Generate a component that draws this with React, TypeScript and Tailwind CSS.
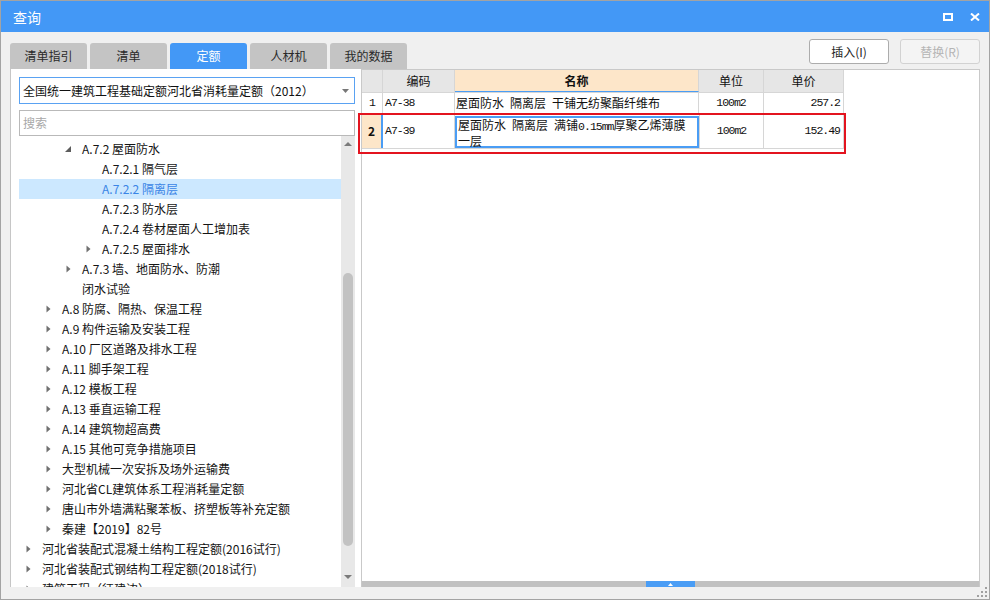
import React from 'react'

const ui = "font-['Noto_Sans_CJK_SC','Microsoft_YaHei',sans-serif]"
const mono = "font-['Liberation_Mono','Noto_Sans_CJK_SC',monospace] text-[11.5px] tracking-[-1px]"

type Node = { level: number; text: string; state?: 'open' | 'closed'; selected?: boolean }

const tree: Node[] = [
  { level: 2, text: 'A.7.2 屋面防水', state: 'open' },
  { level: 3, text: 'A.7.2.1 隔气层' },
  { level: 3, text: 'A.7.2.2 隔离层', selected: true },
  { level: 3, text: 'A.7.2.3 防水层' },
  { level: 3, text: 'A.7.2.4 卷材屋面人工增加表' },
  { level: 3, text: 'A.7.2.5 屋面排水', state: 'closed' },
  { level: 2, text: 'A.7.3 墙、地面防水、防潮', state: 'closed' },
  { level: 2, text: '闭水试验' },
  { level: 1, text: 'A.8 防腐、隔热、保温工程', state: 'closed' },
  { level: 1, text: 'A.9 构件运输及安装工程', state: 'closed' },
  { level: 1, text: 'A.10 厂区道路及排水工程', state: 'closed' },
  { level: 1, text: 'A.11 脚手架工程', state: 'closed' },
  { level: 1, text: 'A.12 模板工程', state: 'closed' },
  { level: 1, text: 'A.13 垂直运输工程', state: 'closed' },
  { level: 1, text: 'A.14 建筑物超高费', state: 'closed' },
  { level: 1, text: 'A.15 其他可竞争措施项目', state: 'closed' },
  { level: 1, text: '大型机械一次安拆及场外运输费', state: 'closed' },
  { level: 1, text: '河北省CL建筑体系工程消耗量定额', state: 'closed' },
  { level: 1, text: '唐山市外墙满粘聚苯板、挤塑板等补充定额', state: 'closed' },
  { level: 1, text: '秦建【2019】82号', state: 'closed' },
  { level: 0, text: '河北省装配式混凝土结构工程定额(2016试行)', state: 'closed' },
  { level: 0, text: '河北省装配式钢结构工程定额(2018试行)', state: 'closed' },
  { level: 0, text: '建筑工程（征建边）', state: 'closed' },
]

const indent = ['pl-0', 'pl-[20px]', 'pl-[40px]', 'pl-[60px]']

function Arrow({ state }: { state?: 'open' | 'closed' }) {
  if (state === 'closed')
    return (
      <svg width="5" height="8" viewBox="0 0 5 8" className="ml-[7px]">
        <path d="M0.5 0.5 L4.5 4 L0.5 7.5 Z" fill="#707070" />
      </svg>
    )
  if (state === 'open')
    return (
      <svg width="6" height="6" viewBox="0 0 6 6" className="ml-[6px]">
        <path d="M6 0 L6 6 L0 6 Z" fill="#5c5c5c" />
      </svg>
    )
  return null
}

function Tab({ label, active }: { label: string; active?: boolean }) {
  return (
    <div
      className={
        active
          ? 'w-[77px] h-[26px] rounded-t-[3px] bg-[#4398f6] text-white flex items-center justify-center text-[12px]'
          : 'w-[77px] h-[26px] rounded-t-[3px] bg-[#c4c4c4] text-[#2a2a2a] flex items-center justify-center text-[12px]'
      }
    >
      {label}
    </div>
  )
}

const cell = 'border-r border-[#d6d6d6] h-full flex items-center shrink-0'
const sp = '\u2002'

export default function App() {
  return (
    <div className={`w-[990px] h-[600px] border border-[#a3a3a3] bg-[#f0f0f0] flex flex-col ${ui}`}>
      {/* title bar */}
      <div className="h-[31px] bg-[#4398f6] flex items-center justify-between pl-[12px] pr-[9px] shrink-0">
        <span className="text-white text-[14px] leading-none">查询</span>
        <div className="flex items-center gap-[17px]">
          <div className="w-[10px] h-[8px] border-2 border-white" />
          <svg width="10" height="8" viewBox="0 0 10 8">
            <path d="M1 0.5 L9 7.5 M9 0.5 L1 7.5" stroke="#fff" strokeWidth="2" />
          </svg>
        </div>
      </div>

      {/* tabs + buttons */}
      <div className="mt-[7px] h-[30px] flex justify-between pl-[9px] pr-[9px] shrink-0">
        <div className="self-end flex gap-[3px]">
          <Tab label="清单指引" />
          <Tab label="清单" />
          <Tab label="定额" active />
          <Tab label="人材机" />
          <Tab label="我的数据" />
        </div>
        <div className="flex gap-[11px] items-start">
          <div className="w-[80px] h-[25px] bg-white border border-[#acacac] rounded-[3px] flex items-center justify-center text-[12px] text-[#1f1f1f]">
            插入(I)
          </div>
          <div className="w-[80px] h-[25px] bg-[#f4f4f4] border border-[#d2d2d2] rounded-[3px] flex items-center justify-center text-[12px] text-[#b4b4b4]">
            替换(R)
          </div>
        </div>
      </div>

      {/* main */}
      <div className="h-[518px] flex pl-[9px] pr-[9px] shrink-0">
        {/* left panel */}
        <div className="w-[351px] h-full bg-white border-l border-[#c6c6c6] flex flex-col pt-[8px] pl-[8px] pr-[6px]">
          <div className="h-[27px] border border-[#5aa2f2] flex items-center justify-between pl-[3px] pr-[5px] text-[12px] text-[#111]">
            <span>全国统一建筑工程基础定额河北省消耗量定额（2012）</span>
            <svg width="7" height="4" viewBox="0 0 7 4">
              <path d="M0 0 L7 0 L3.5 4 Z" fill="#777" />
            </svg>
          </div>
          <div className="mt-[6px] h-[26px] border border-[#b9b9b9] flex items-center pl-[3px] text-[12px] text-[#a8a8a8]">
            搜索
          </div>
          <div className="flex-1 flex min-h-0">
            <div className="flex-1 pt-[3px] overflow-hidden">
              {tree.map((n, i) => (
                <div
                  key={i}
                  className={`h-[20px] flex items-center ${indent[n.level]} ${
                    n.selected ? 'bg-[#cce8ff] text-[#3a85e6]' : 'text-[#141414]'
                  }`}
                >
                  <div className="w-[23px] shrink-0 flex items-center">
                    <Arrow state={n.state} />
                  </div>
                  <span className="text-[12px] whitespace-nowrap leading-none">{n.text}</span>
                </div>
              ))}
            </div>
            <div className="w-[14px] bg-[#e8e8e8] flex flex-col items-center shrink-0">
              <div className="h-[16px] flex items-center justify-center">
                <svg width="8" height="4" viewBox="0 0 8 4">
                  <path d="M0 4 L8 4 L4 0 Z" fill="#7a7a7a" />
                </svg>
              </div>
              <div className="h-[121px]" />
              <div className="w-[10px] h-[273px] rounded-full bg-[#c2c2c2]" />
              <div className="flex-1" />
              <div className="h-[12px] flex items-start justify-center">
                <svg width="8" height="4" viewBox="0 0 8 4">
                  <path d="M0 0 L8 0 L4 4 Z" fill="#7a7a7a" />
                </svg>
              </div>
            </div>
          </div>
        </div>

        {/* right panel */}
        <div className="relative w-[619px] h-full bg-white border-t border-x border-[#c9c9c9] flex flex-col">
          <div className="flex-1 text-[12px] text-[#111]">
            {/* header */}
            <div className="h-[23px] flex border-b border-[#d6d6d6] bg-[#e6e6e6] w-[482px]">
              <div className={`${cell} w-[21px]`} />
              <div className={`${cell} w-[72px] justify-center`}>编码</div>
              <div className={`${cell} w-[244px] justify-center bg-[#fde6c9] border-b border-b-[#4a9df5] font-bold`}>名称</div>
              <div className={`${cell} w-[65px] justify-center`}>单位</div>
              <div className={`${cell} w-[80px] justify-center`}>单价</div>
            </div>
            {/* row 1 */}
            <div className="h-[21px] flex border-b border-[#d6d6d6] w-[482px]">
              <div className={`${cell} w-[21px] justify-center ${mono}`}>1</div>
              <div className={`${cell} w-[72px] pl-[2px] ${mono}`}>A7-38</div>
              <div className={`${cell} w-[244px] pl-[1px] whitespace-nowrap`}>
                屋面防水{sp}隔离层{sp}干铺无纺聚酯纤维布
              </div>
              <div className={`${cell} w-[65px] justify-center ${mono}`}>100m2</div>
              <div className={`${cell} w-[80px] justify-end pr-[3px] ${mono}`}>257.2</div>
            </div>
            {/* row 2 */}
            <div className="h-[35px] flex border-b border-[#d6d6d6] w-[482px]">
              <div className={`${cell} w-[21px] justify-center bg-[#fde6c9] border-r-2 border-r-[#4a9df5] font-bold text-[12px]`}>
                2
              </div>
              <div className={`${cell} w-[72px] pl-[2px] ${mono}`}>A7-39</div>
              <div className="w-[244px] h-full shrink-0 pt-[2px]">
                <div className="h-full border-2 border-[#4a9df5] pl-[1px] text-[12px] leading-[14px]">
                  屋面防水{sp}隔离层{sp}满铺<span className={mono}>0.15mm</span>厚聚乙烯薄膜
                  <br />
                  一层
                </div>
              </div>
              <div className={`${cell} w-[65px] justify-center ${mono} border-l border-[#d6d6d6]`}>100m2</div>
              <div className={`${cell} w-[80px] justify-end pr-[3px] ${mono}`}>152.49</div>
            </div>
          </div>
          {/* red highlight annotation */}
          <div className="absolute left-[-4px] top-[43px] w-[488px] h-[41px] border-2 border-[#e3141f]" />
          {/* horizontal scrollbar */}
          <div className="h-[6px] bg-[#c1c1c1] flex shrink-0">
            <div className="w-[284px]" />
            <div className="w-[49px] h-full bg-[#4a9df5] flex items-center justify-center">
              <svg width="5" height="3" viewBox="0 0 5 3">
                <path d="M0 3 L5 3 L2.5 0 Z" fill="#fff" />
              </svg>
            </div>
          </div>
        </div>
      </div>

      {/* bottom strip with grip */}
      <div className="flex-1 flex justify-end items-end pr-[2px] pb-[2px]">
        <svg width="10" height="10" viewBox="0 0 10 10">
          <rect x="8" y="0" width="2" height="2" fill="#a0a0a0" />
          <rect x="4" y="4" width="2" height="2" fill="#a0a0a0" />
          <rect x="8" y="4" width="2" height="2" fill="#a0a0a0" />
          <rect x="0" y="8" width="2" height="2" fill="#a0a0a0" />
          <rect x="4" y="8" width="2" height="2" fill="#a0a0a0" />
          <rect x="8" y="8" width="2" height="2" fill="#a0a0a0" />
        </svg>
      </div>
    </div>
  )
}
